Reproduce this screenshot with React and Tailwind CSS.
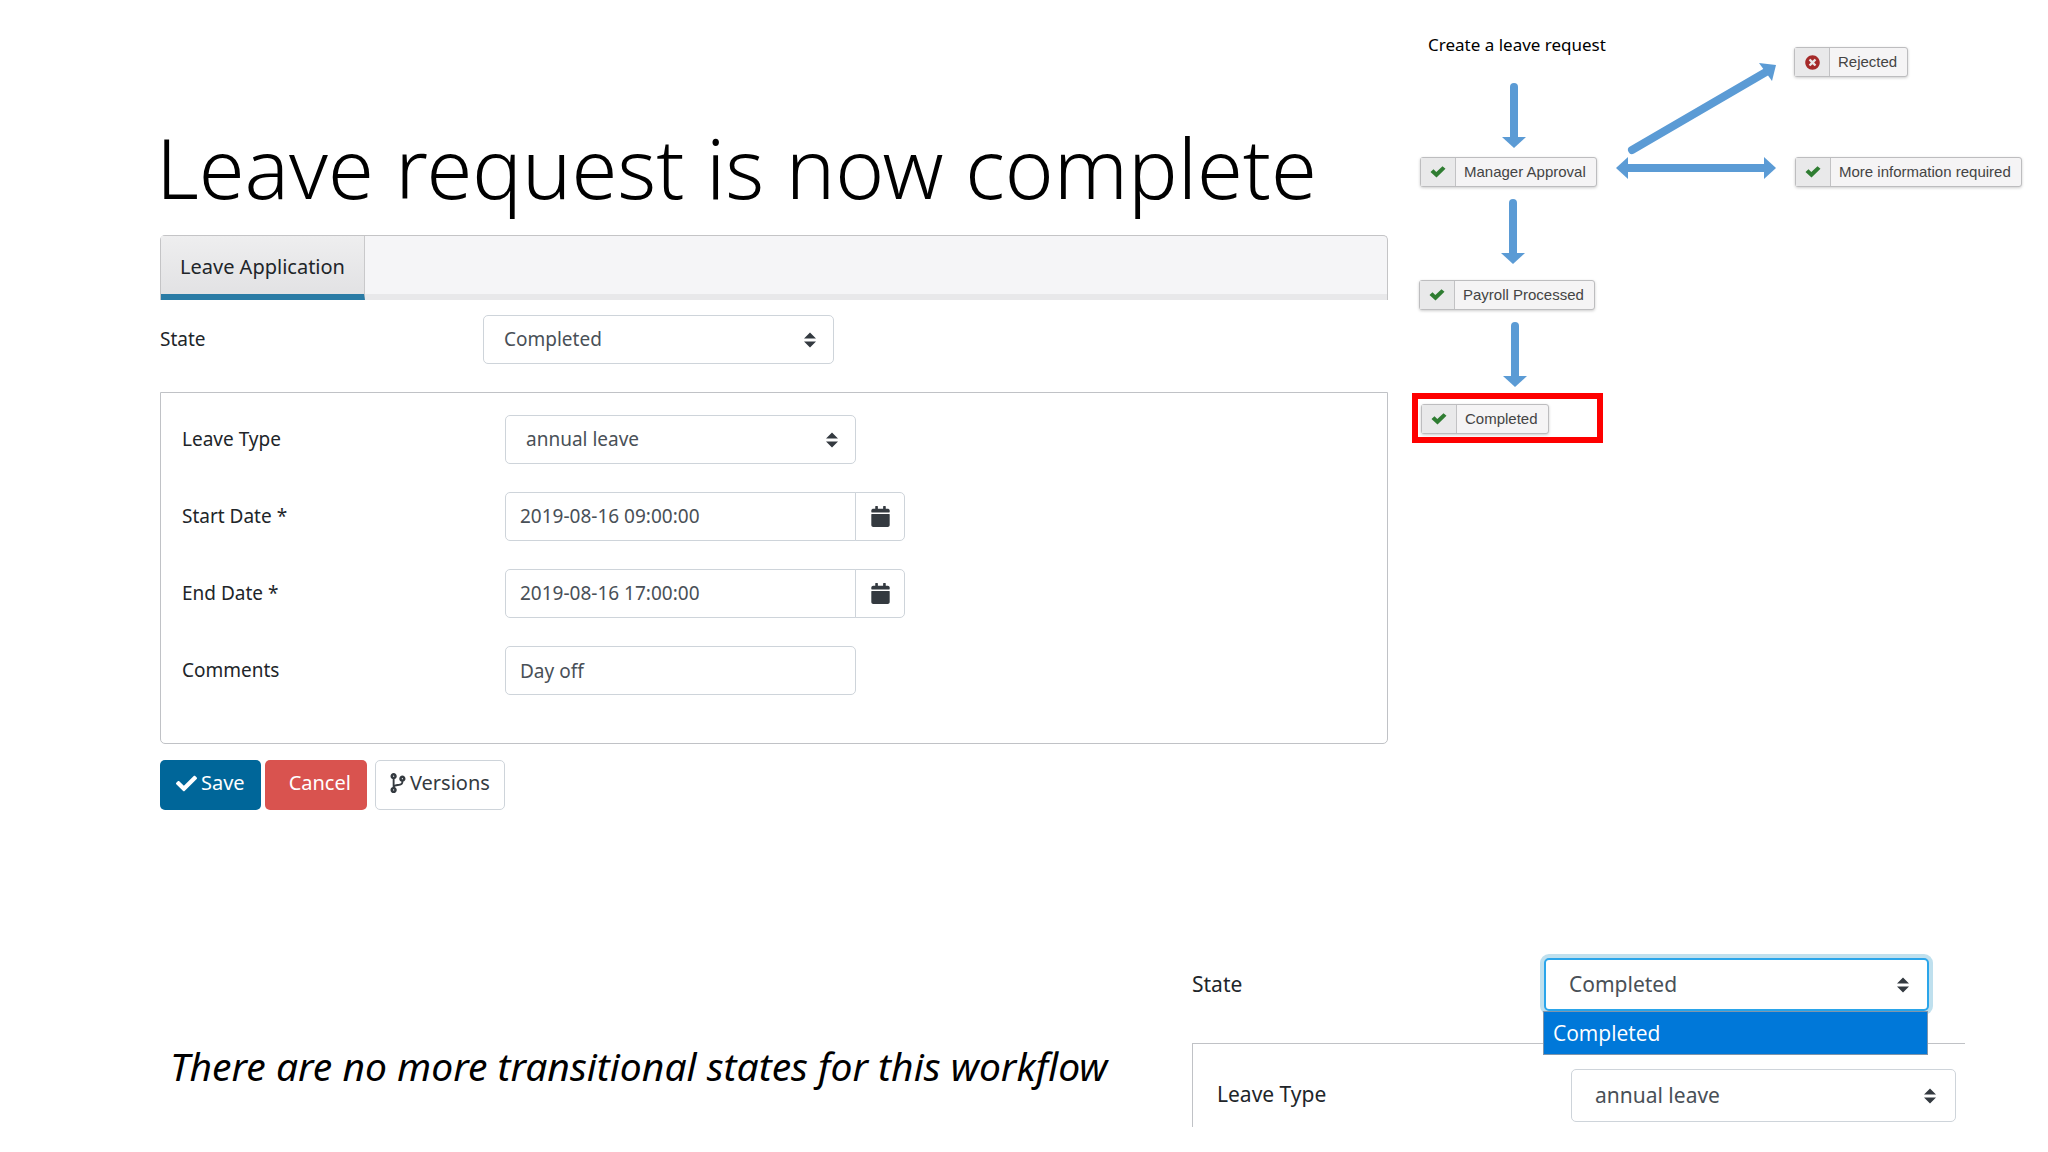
import { useState } from "react";
import { FaCalendar, FaCheck, FaCodeBranch, FaTimesCircle } from "react-icons/fa";
import clsx from "clsx";

const STATES = ["Completed"];
const LEAVE_TYPES = ["annual leave"];

/* ---------------- FORM CONTROLS ---------------- */
function Select({ id, options, large, open, className }) {
  return (
    <div className={clsx("relative", className)}>
      <select
        id={id}
        className={clsx(
          "block w-full h-full appearance-none rounded-[5px] border bg-white text-[#495057] outline-none",
          large ? "pl-[23px] text-[21px]" : "pl-5 text-[19px]",
          open
            ? "border-2 border-[#2aa5ea] ring-4 ring-[#bfe0ee]"
            : "border-[#ced4da]"
        )}
      >
        {options.map((o) => (
          <option key={o}>{o}</option>
        ))}
      </select>
      <svg
        viewBox="0 0 12 16"
        className={clsx(
          "pointer-events-none absolute inset-y-0 my-auto h-4 w-3 fill-[#343a40]",
          large ? "right-5" : "right-[18px]"
        )}
      >
        <path d="M6 0.5 L12 6.5 H0 Z M6 15.5 L0 9.5 H12 Z" />
      </svg>
    </div>
  );
}

function Row({ id, label, children }) {
  return (
    <div className="flex items-center">
      <label htmlFor={id} className="w-[323px] shrink-0 text-[#212529]">
        {label}
      </label>
      {children}
    </div>
  );
}

function DateInput({ id, value, onChange, label }) {
  return (
    <div className="flex h-[49px] w-[400px]">
      <input
        id={id}
        type="text"
        value={value}
        onChange={(e) => onChange(e.target.value)}
        className="w-[351px] rounded-l-[5px] border border-[#ced4da] px-[14px] text-[#495057]"
      />
      <button
        type="button"
        aria-label={label}
        className="-ml-px flex flex-1 items-center justify-center rounded-r-[5px] border border-[#ced4da]"
      >
        <FaCalendar className="h-[21px] w-[19px] text-[#343a40]" />
      </button>
    </div>
  );
}

/* ---------------- LEAVE FORM ---------------- */
function LeaveForm() {
  const [start, setStart] = useState("2019-08-16 09:00:00");
  const [end, setEnd] = useState("2019-08-16 17:00:00");
  const [comments, setComments] = useState("Day off");

  return (
    <form className="text-[19px]" onSubmit={(e) => e.preventDefault()}>
      {/* TABS */}
      <div className="flex h-[65px] rounded-t-[5px] border border-b-0 border-[#c4c4c6] bg-[#f5f5f7]">
        <button
          type="button"
          className="border-r border-b-[6px] border-r-[#c9c9cb] border-b-[#2a7ba5] bg-linear-to-b from-[#eeeeef] to-[#e2e2e4] px-[19px] pt-1 text-xl text-[#212529]"
        >
          Leave Application
        </button>
        <div className="flex-1 border-b-[6px] border-[#e8e8ea]" />
      </div>

      <div className="pt-[15px]">
        <Row id="state" label="State">
          <Select id="state" options={STATES} className="h-[49px] w-[351px]" />
        </Row>
      </div>

      {/* FIELDS */}
      <div className="mt-7 flex flex-col gap-7 rounded-b-[5px] border border-[#c0c2c6] pt-[22px] pb-12 pl-[21px]">
        <Row id="leave-type" label="Leave Type">
          <Select id="leave-type" options={LEAVE_TYPES} className="h-[49px] w-[351px]" />
        </Row>
        <Row id="start" label="Start Date *">
          <DateInput id="start" value={start} onChange={setStart} label="Pick start date" />
        </Row>
        <Row id="end" label="End Date *">
          <DateInput id="end" value={end} onChange={setEnd} label="Pick end date" />
        </Row>
        <Row id="comments" label="Comments">
          <input
            id="comments"
            type="text"
            value={comments}
            onChange={(e) => setComments(e.target.value)}
            className="h-[49px] w-[351px] rounded-[5px] border border-[#ced4da] px-[14px] text-[#495057]"
          />
        </Row>
      </div>

      {/* ACTIONS */}
      <div className="mt-4 flex gap-1 text-xl">
        <button
          type="submit"
          className="flex h-[50px] items-center gap-1 rounded-[5px] bg-[#006699] px-4 pb-1 text-white"
        >
          <FaCheck className="size-[21px]" />
          Save
        </button>
        <button
          type="button"
          className="flex h-[50px] items-center rounded-[5px] bg-[#d9534f] pr-4 pb-1 pl-6 text-white"
        >
          Cancel
        </button>
        <button
          type="button"
          className="ml-1 flex h-[50px] items-center gap-1 rounded-[5px] border border-[#ced4da] px-[14px] pb-1 text-[#343a40]"
        >
          <FaCodeBranch className="h-5 w-4" />
          Versions
        </button>
      </div>
    </form>
  );
}

/* ---------------- WORKFLOW DIAGRAM ---------------- */
function Node({ label, rejected, className }) {
  return (
    <div
      className={clsx(
        "absolute flex h-[30px] items-stretch rounded-[3px] border border-[#bdbdbf] bg-[#f5f4f5] shadow-[0_1px_3px_rgba(0,0,0,0.2)]",
        className
      )}
    >
      <span className="flex w-[35px] items-center justify-center border-r border-[#c2c2c4] bg-[#e9e9ea]">
        {rejected ? (
          <FaTimesCircle className="size-[15px] text-[#a52a2a]" />
        ) : (
          <svg viewBox="0 0 16 12" className="h-3 w-4 fill-[#2f7d32]">
            <path d="M0.5 6 L3.5 3.2 L6.3 6 L12.5 0.3 L15.5 2.8 L6.5 11.5 Z" />
          </svg>
        )}
      </span>
      <span className="pr-[10px] pl-2 font-['Liberation_Sans',sans-serif] text-[15px] leading-7 whitespace-nowrap text-[#444]">
        {label}
      </span>
    </div>
  );
}

function Workflow() {
  return (
    <div className="relative h-[450px] w-[636px] shrink-0">
      <svg viewBox="0 0 636 450" className="absolute inset-0 size-full fill-[#5b9bd5]">
        <g stroke="#5b9bd5" strokeWidth="8" strokeLinecap="round">
          <path d="M102 87 V138" />
          <path d="M101 203 V255" />
          <path d="M103 326 V378" />
          <path d="M220 150 L354 72" />
          <path d="M214 168 H354" strokeLinecap="butt" />
        </g>
        <path d="M90 137 H114 L102 148 Z" />
        <path d="M89 253 H113 L101 264 Z" />
        <path d="M91 376 H115 L103 387 Z" />
        <path d="M347 63 L364 65 L360 81 Z" />
        <path d="M204 168 L216 157 V179 Z" />
        <path d="M364 168 L352 157 V179 Z" />
      </svg>
      <div className="absolute top-[33px] left-[16px] text-[17px] leading-[24px] whitespace-nowrap text-black">
        Create a leave request
      </div>
      <Node label="Rejected" rejected className="top-[47px] left-[382px]" />
      <Node label="Manager Approval" className="top-[157px] left-[8px]" />
      <Node label="More information required" className="top-[157px] left-[383px]" />
      <Node label="Payroll Processed" className="top-[280px] left-[7px]" />
      <div className="absolute top-[393px] left-0 h-[50px] w-[191px] border-[6px] border-[#fe0000]" />
      <Node label="Completed" className="top-[404px] left-[9px]" />
    </div>
  );
}

/* ---------------- OPEN STATE LIST ---------------- */
function StateDropdown() {
  return (
    <div className="mr-[83px] w-[773px] text-[21px] text-[#212529]">
      <div className="relative z-10 flex items-center">
        <label htmlFor="open-state" className="w-[352px]">
          State
        </label>
        <div className="relative">
          <Select id="open-state" options={STATES} large open className="h-[53px] w-[385px]" />
          <ul
            role="listbox"
            aria-label="State"
            className="absolute top-full -left-px w-[385px] border border-[#7f95ab] bg-[#0078d9]"
          >
            <li
              role="option"
              aria-selected="true"
              className="px-[9px] font-['Open_Sans',sans-serif] leading-[42px] text-white"
            >
              Completed
            </li>
          </ul>
        </div>
      </div>
      <div className="mt-8 flex h-[84px] items-start border-t border-l border-[#c0c2c6] pt-[25px] pl-6">
        <label htmlFor="open-leave-type" className="w-[354px] leading-[50px]">
          Leave Type
        </label>
        <Select
          id="open-leave-type"
          options={LEAVE_TYPES}
          large
          className="h-[53px] w-[385px]"
        />
      </div>
    </div>
  );
}

export default function App() {
  return (
    <main className="min-h-screen bg-white font-['Noto_Sans',sans-serif]">
      <div className="flex">
        <div className="mr-6 ml-[160px] flex-1 pt-[117px]">
          <h1 className="mb-[18px] -ml-1 text-[83px] leading-[100px] font-light whitespace-nowrap text-black">
            Leave request is now complete
          </h1>
          <LeaveForm />
        </div>
        <Workflow />
      </div>

      <div className="mt-[148px] flex justify-between">
        <p className="mt-[88px] ml-[170px] text-[39px] leading-[40px] whitespace-nowrap text-black italic">
          There are no more transitional states for this workflow
        </p>
        <StateDropdown />
      </div>
    </main>
  );
}
